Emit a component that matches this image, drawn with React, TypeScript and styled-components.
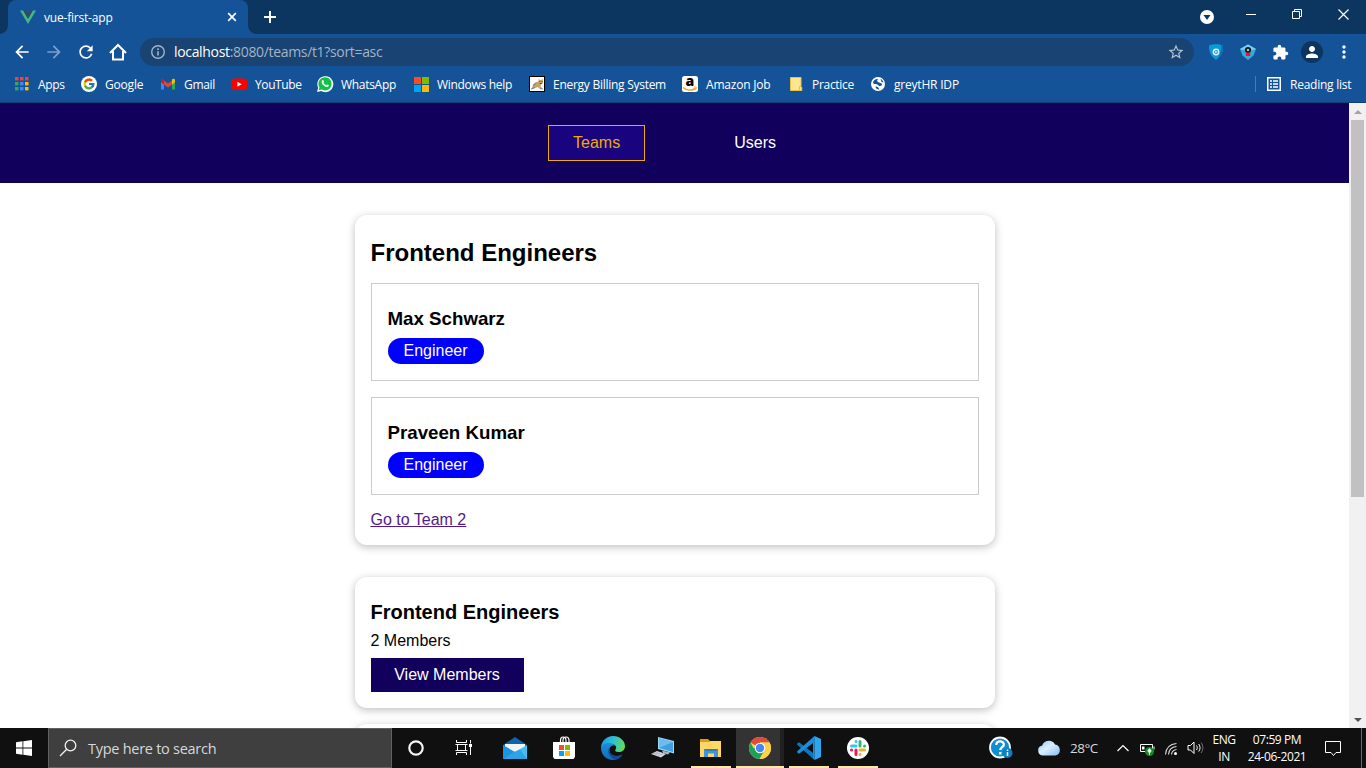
import React from "react";
import styled, { createGlobalStyle } from "styled-components";
import { MdArrowBack, MdArrowForward, MdRefresh, MdStarBorder, MdExtension, MdPerson, MdMoreVert } from "react-icons/md";
import { FcGoogle } from "react-icons/fc";

const Global = createGlobalStyle`
  * { box-sizing: border-box; }
  html, body { margin: 0; padding: 0; overflow: hidden; }
  svg { display: block; flex: none; overflow: visible; }
`;

const ui = `"Open Sans", "Noto Sans", sans-serif`;

const Screen = styled.div`
  width: 1366px;
  height: 768px;
  display: flex;
  flex-direction: column;
  overflow: hidden;
  font-family: ${ui};
  background: #fff;
`;

const Label = styled.span<{ $w: number; $size?: number; $ls?: number; $color?: string }>`
  flex: none;
  width: ${(p) => p.$w}px;
  font-size: ${(p) => p.$size ?? 12}px;
  letter-spacing: ${(p) => p.$ls ?? -0.3}px;
  color: ${(p) => p.$color ?? "#fff"};
  white-space: nowrap;
`;

/* ---------- browser chrome ---------- */

const TabStrip = styled.div`
  height: 34px;
  flex: none;
  display: flex;
  align-items: center;
  background: #0c3660;
  padding-left: 8px;
`;

const Tab = styled.div`
  position: relative;
  width: 240px;
  height: 34px;
  display: flex;
  align-items: center;
  padding: 0 10px 0 12px;
  border-radius: 8px 8px 0 0;
  background: #155399;
  &::before,
  &::after {
    content: "";
    position: absolute;
    bottom: 0;
    width: 8px;
    height: 8px;
  }
  &::before {
    left: -8px;
    background: radial-gradient(circle at 0 0, transparent 7.5px, #155399 8px);
  }
  &::after {
    right: -8px;
    background: radial-gradient(circle at 100% 0, transparent 7.5px, #155399 8px);
  }
`;

const TabTitle = styled(Label)`
  margin-left: 8px;
  margin-right: auto;
`;

const NewTab = styled.div`
  margin-left: 16px;
`;

const WindowControls = styled.div`
  margin-left: auto;
  display: flex;
  align-items: center;
  height: 34px;
  padding-right: 17px;
`;

const ControlSlot = styled.div<{ $gap: number; $up?: number }>`
  margin-left: ${(p) => p.$gap}px;
  margin-bottom: ${(p) => p.$up ?? 0}px;
`;

const Toolbar = styled.div`
  height: 36px;
  flex: none;
  display: flex;
  align-items: center;
  background: #155399;
  padding: 0 8px 0 12px;
  color: #fff;
`;

const NavButtons = styled.div`
  display: flex;
  flex: none;
  gap: 12px;
  width: 128px;
`;

const AddressBar = styled.div`
  width: 1054px;
  flex: none;
  height: 28px;
  display: flex;
  align-items: center;
  border-radius: 14px;
  background: #194372;
  padding: 0 9px 0 10px;
`;

const Url = styled.div`
  flex: 1;
  margin-left: 8px;
  font-size: 14px;
  letter-spacing: -0.33px;
  color: #a3b4c7;
  line-height: 20px;
  b {
    font-weight: 400;
    color: #fff;
  }
`;

const Extensions = styled.div`
  display: flex;
  align-items: center;
  margin-left: 12px;
  gap: 10px;
`;

const Avatar = styled.div`
  width: 22px;
  height: 22px;
  border-radius: 50%;
  background: #0c3660;
  display: grid;
  place-items: center;
  margin-left: 1px;
`;

const Bookmarks = styled.div`
  height: 33px;
  flex: none;
  display: flex;
  align-items: center;
  gap: 16px;
  padding: 0 14px 4px 14px;
  background: #155399;
  border-bottom: 1px solid #113f73;
`;

const Bookmark = styled.div`
  display: flex;
  align-items: center;
  gap: 8px;
  flex: none;
`;

const IconBox = styled.div<{ $w?: number }>`
  width: ${(p) => p.$w ?? 16}px;
  height: 20px;
  display: grid;
  place-items: center;
`;

const ReadingList = styled(Bookmark)`
  margin-left: auto;
  height: 16px;
  border-left: 1px solid #4a7ab1;
  padding-left: 10px;
`;

/* ---------- page ---------- */

const Viewport = styled.div`
  height: 625px;
  flex: none;
  display: flex;
  overflow: hidden;
  font-family: "Liberation Sans", Arial, sans-serif;
  font-size: 16px;
  color: #000;
`;

const Page = styled.div`
  width: 1349px;
  height: 625px;
  overflow: hidden;
`;

const Header = styled.header`
  height: 80px;
  display: flex;
  justify-content: center;
  align-items: center;
  gap: 64px;
  background: #11005c;
`;

const NavLink = styled.a<{ $active?: boolean }>`
  height: 36px;
  line-height: 34px;
  padding: 0 24px;
  border: 1px solid ${(p) => (p.$active ? "#f1a80a" : "transparent")};
  background: ${(p) => (p.$active ? "#1a037e" : "transparent")};
  color: ${(p) => (p.$active ? "#f1a80a" : "#fff")};
`;

const Card = styled.section<{ $top: number; $height: number }>`
  width: 640px;
  height: ${(p) => p.$height}px;
  margin: ${(p) => p.$top}px auto 0;
  padding: 16px;
  border-radius: 12px;
  background: #fff;
  box-shadow: 0 2px 8px rgba(0, 0, 0, 0.26);
`;

const TeamTitle = styled.h2`
  margin: 8px 0 16px;
  font-size: 24px;
  line-height: 28px;
`;

const Member = styled.div`
  height: 98px;
  border: 1px solid #ccc;
  padding: 24px 16px 16px;
  margin-bottom: 16px;
`;

const MemberName = styled.h3`
  margin: 0 0 9px;
  font-size: 18.72px;
  line-height: 21px;
`;

const Role = styled.span`
  display: inline-block;
  height: 26px;
  line-height: 25px;
  padding: 0 16px;
  border-radius: 13px;
  background: #00f;
  color: #fff;
`;

const TeamLink = styled.a`
  display: block;
  line-height: 18px;
  color: #551a8b;
  text-decoration: underline;
`;

const SmallTitle = styled.h3`
  margin: 8px 0;
  font-size: 20px;
  line-height: 23px;
`;

const Count = styled.div`
  line-height: 18px;
  margin: 0 0 8px;
`;

const ViewButton = styled.a`
  display: inline-block;
  height: 34px;
  line-height: 33px;
  width: 153px;
  text-align: center;
  background: #11005c;
  color: #fff;
`;

const Scrollbar = styled.div`
  width: 17px;
  height: 625px;
  display: flex;
  flex-direction: column;
  align-items: center;
  background: #f1f1f1;
`;

const ScrollArrow = styled.div`
  height: 17px;
  width: 17px;
  display: grid;
  place-items: center;
`;

const Thumb = styled.div`
  width: 13px;
  height: 377px;
  background: #c1c1c1;
  margin-bottom: auto;
`;

/* ---------- taskbar ---------- */

const Taskbar = styled.div`
  height: 40px;
  flex: none;
  display: flex;
  background: #101010;
`;

const Start = styled.div`
  width: 48px;
  display: grid;
  place-items: center;
`;

const Search = styled.div`
  width: 344px;
  height: 40px;
  border: 1px solid #616161;
  background: #3f3f3f;
  display: flex;
  align-items: center;
  padding-left: 10px;
  gap: 11px;
`;

const Apps = styled.div`
  width: 491px;
  display: grid;
  grid-template-columns: 48px 48px 54px 44px 54px 45px 51px 48px 50px 48px;
`;

const AppSlot = styled.div<{ $open?: boolean; $active?: boolean }>`
  display: grid;
  place-items: center;
  position: relative;
  background: ${(p) => (p.$active ? "linear-gradient(90deg, #333 44px, #202020 44px)" : "none")};
  &::after {
    content: "";
    display: ${(p) => (p.$open || p.$active ? "block" : "none")};
    position: absolute;
    bottom: 0;
    left: ${(p) => (p.$active ? 0 : "calc(50% - 20px)")};
    width: ${(p) => (p.$active ? "48px" : "40px")};
    height: 2px;
    background: #ffe7a6;
  }
`;

const Tray = styled.div`
  flex: 1;
  display: flex;
  align-items: center;
  justify-content: flex-end;
`;

const TraySlot = styled.div<{ $w: number; $right?: number; $left?: number }>`
  width: ${(p) => p.$w}px;
  padding: 0 ${(p) => p.$right ?? 0}px 0 ${(p) => p.$left ?? 0}px;
  flex: none;
  display: grid;
  place-items: center;
`;

const TrayText = styled.div<{ $w: number; $ls?: number }>`
  width: ${(p) => p.$w}px;
  flex: none;
  text-align: center;
  font-size: 12px;
  line-height: 17px;
  letter-spacing: ${(p) => p.$ls ?? -0.4}px;
  color: #fff;
  white-space: nowrap;
  margin-top: -1px;
`;

const ShowDesktop = styled.div`
  width: 5px;
  height: 40px;
  border-left: 1px solid #6a6a6a;
`;

/* ---------- drawings ---------- */

const VueLogo = () => (
  <svg width="16" height="16" viewBox="0 0 16 16">
    <path d="M0 1.500h3.200L8 9.800l4.800-8.300H16L8 15z" fill="#41b883" />
    <path d="M3.200 1.500h2.900L8 4.800l1.900-3.300h2.900L8 9.800z" fill="#35495e" />
  </svg>
);

const HomeIcon = () => (
  <svg width="20" height="20" viewBox="0 0 20 20">
    <path d="M2 11L10 3l8 8M5 9v8.500h10V9" fill="none" stroke="#fff" strokeWidth="2" />
  </svg>
);

const AppsGrid = () => {
  const c = ["#f44336", "#f44336", "#f44336", "#34a853", "#4285f4", "#fbbc05", "#34a853", "#4285f4", "#fbbc05"];
  return (
    <svg width="16" height="16">
      {c.map((f, i) => (
        <g key={i}>
          <rect x={1 + (i % 3) * 5} y={1 + Math.floor(i / 3) * 5} width="3.500" height="3" fill={f} />
          <rect x={1 + (i % 3) * 5} y={4 + Math.floor(i / 3) * 5} width="3.500" height="1" fill={f} opacity=".4" />
        </g>
      ))}
    </svg>
  );
};

const GoogleIcon = () => (
  <svg width="16" height="16" viewBox="0 0 16 16">
    <circle cx="8" cy="8" r="8" fill="#fff" />
    <FcGoogle x="1.500" y="1.500" width="13" height="13" size={13} />
  </svg>
);

const GmailIcon = () => (
  <svg width="16" height="16" viewBox="0 0 16 16">
    <path d="M1 4v9.500h3V6z" fill="#4285f4" />
    <path d="M15 4v9.500h-3V6z" fill="#34a853" />
    <path d="M4 4.500v4L8 11.500l4-3v-4L8 7.500z" fill="#ea4335" />
    <path d="M1 4.200C1 2.600 2.700 2.200 4 3.300v5.200L1 6.300z" fill="#c5221f" />
    <path d="M15 4.200c0-1.600-1.700-2-3-.9v5.200l3-2.200z" fill="#fbbc04" />
  </svg>
);

const YouTubeIcon = () => (
  <svg width="16" height="16" viewBox="0 0 16 16">
    <rect x="0" y="2.500" width="16" height="11.500" rx="3" fill="#f00" />
    <path d="M6.400 5.800v4.900l4.200-2.450z" fill="#fff" />
  </svg>
);

const WhatsAppIcon = () => (
  <svg width="16" height="16" viewBox="0 0 16 16">
    <path d="M0 16l1.200-4.200A8 8 0 1 1 4.200 15z" fill="#fff" />
    <path d="M1.700 14.300l.7-2.900A6.600 6.600 0 1 1 4.700 13.600z" fill="#12c143" />
    <path d="M5.500 4.200c.5-.2.800-.1 1 .4l.5 1.200c.1.300-.5.800-.5 1 .6 1.200 1.500 1.900 2.700 2.400.4-.1.700-.9 1-.8l1.500.7c.4.300 0 1.400-.6 1.700-2.700 1.100-7-3-6.400-5.300.1-.5.400-1 .8-1.300z" fill="#fff" />
  </svg>
);

const MsSquares = ({ s = 16, g = 1 }: { s?: number; g?: number }) => {
  const q = (s - g) / 2;
  return (
    <svg width={s} height={s}>
      <rect width={q} height={q} fill="#f25022" />
      <rect x={q + g} width={q} height={q} fill="#7fba00" />
      <rect y={q + g} width={q} height={q} fill="#00a4ef" />
      <rect x={q + g} y={q + g} width={q} height={q} fill="#ffb900" />
    </svg>
  );
};

const TomcatIcon = () => (
  <svg width="16" height="16">
    <rect x=".5" y=".5" width="15" height="15" fill="#fff" stroke="#000" />
    <path d="M3 12l1-3.500 3-2.500 2.500-.5V3l1.500 1h1.500L14 3v4l-2 1.500-.5 2 2 2H10l-1-1.500-3 1L4.500 13z" fill="#c3a368" />
    <path d="M2 13l4-1.500M11 12.500l3 .5M4 9.500l3-2" stroke="#777" strokeWidth=".9" />
    <path d="M10.500 5.500h.8M12.500 5.500h.8M10.800 7.500h2" stroke="#4c3a1a" strokeWidth="1" />
  </svg>
);

const AmazonIcon = () => (
  <svg width="16" height="16">
    <rect width="16" height="16" rx="2.500" fill="#fff" />
    <text x="3.400" y="10.300" fontFamily="Open Sans" fontWeight="800" fontSize="14" fill="#000">a</text>
    <path d="M1 11.500c4 3.300 9 3.200 12.500.8" fill="none" stroke="#f90" strokeWidth="1.500" />
    <path d="M11.800 11.200c1.500-.5 2.600-.2 2.500.1.200.6-.1 1.500-.9 2.400" fill="none" stroke="#f90" strokeWidth="1" />
  </svg>
);

const FolderMark = () => (
  <svg width="16" height="16">
    <path d="M2.500 1.500h10.500v9l.8 1v3H2.500z" fill="#ffe58f" stroke="#e6c34f" />
    <path d="M11.500 14v-3.500h1.500" fill="none" stroke="#e6c34f" />
  </svg>
);

const GlobeIcon = () => (
  <svg width="16" height="16">
    <circle cx="8" cy="8" r="7" fill="#fff" />
    <path d="M3 6.500C3.300 5 4.500 3.700 5.800 3.200L8.500 3c-1.500 1-1.800 2-.5 3s3 .6 3.800 1.800S11 10.500 9.500 10 7.500 8 5.500 8 3.500 7.500 3 6.500z" fill="#155399" />
    <path d="M5.500 10.500c1.500 0 2.500.5 3 1.500l1 1.500c-2 .3-3.800-.8-4-3zM10.500 3c1.500.5 2.700 2 3 3.500l-2-.5z" fill="#155399" />
  </svg>
);

const ShieldIcon = () => (
  <svg width="16" height="16" viewBox="0 0 16 16">
    <path d="M1 1.500C5-.3 11-.3 15 1.500c.3 6-2 11-7 14.500C3 12.500.7 7.500 1 1.500z" fill="#0a9ad9" />
    <path d="M13 1l2 .5c.3 6-2 11-7 14.500 4-4 5.500-9.500 5-15z" fill="#0a75b0" />
    <circle cx="8" cy="8" r="3.400" fill="#e8f6fc" />
    <path d="M9.800 7C8.600 6 6.500 6.500 6.500 8.100c0 1.800 2.500 1.900 3.200.7V8H8.300" fill="none" stroke="#0593d3" />
  </svg>
);

const KeeperIcon = () => (
  <svg width="16" height="16" viewBox="0 0 16 16">
    <path d="M8 .5L16 5l-2.500 6.500L8 16l-5.500-4.500L0 5z" fill="#3ba7dc" />
    <path d="M8 .5L16 5l-3 1-5-2-5 2-3-1z" fill="#7bd0f2" />
    <circle cx="8" cy="6" r="2.200" fill="#7bd0f2" stroke="#111" strokeWidth="1.700" />
    <rect x="6" y="8.600" width="4.200" height="3.400" fill="#f21818" />
  </svg>
);

const ReadingIcon = () => (
  <svg width="16" height="16" fill="none" stroke="#fff">
    <rect x="1.750" y="1.750" width="12.500" height="12.500" strokeWidth="1.500" />
    <path d="M4 5h2M4 8h2M4 11h2M7 5h5M7 8h5M7 11h5" strokeWidth="1.600" />
  </svg>
);

const InfoIcon = () => (
  <svg width="16" height="16" fill="none" stroke="#a3b4c7">
    <circle cx="8" cy="8" r="6.300" strokeWidth="1.400" />
    <path d="M8 7.200v4.300M8 4.300v1.600" strokeWidth="1.600" />
  </svg>
);

const CortanaIcon = () => (
  <svg width="18" height="18"><circle cx="9" cy="9" r="6.700" fill="none" stroke="#f4f4f4" strokeWidth="2.200" /></svg>
);

const TaskViewIcon = () => (
  <svg width="18" height="18" fill="none" stroke="#fff">
    <path d="M1.500 1v2.500h10V1M1.500 16v-2.500h10V16M2.500 5.500h8v6h-8zM15.500 1v3.500M15.500 8v8M0.500 5.500h12M0.500 11.500h12" />
    <rect x="14" y="5" width="3" height="3" fill="#fff" stroke="none" />
  </svg>
);

const MailIcon = () => (
  <svg width="24" height="24" viewBox="0 0 24 24">
    <path d="M0 9L12 1l12 8v5H0z" fill="#0b64ad" />
    <path d="M2 8h20v5l-10 6L2 13z" fill="#f3f3f3" />
    <path d="M0 9l12 7-12 7z" fill="#1a94e0" />
    <path d="M24 9v14H0z" fill="#40c0f2" />
    <path d="M0 23l11-7 6-2.500L24 23z" fill="#2ba5e8" />
  </svg>
);

const StoreIcon = () => (
  <svg width="24" height="24" viewBox="0 0 24 24">
    <path d="M1 6h22v15l-1.500 2h-19L1 21z" fill="#fff" />
    <path d="M8.500 6V4.500c0-2 1-3.500 2.500-3.500 2 0 3 1.500 3 3.500V6M11 6V4.500c0-2 1-3.500 3-3.500s3 1.500 3 3.500V6" fill="none" stroke="#fff" strokeWidth="1.200" />
    <rect x="7" y="9" width="5" height="5" fill="#f25022" />
    <rect x="13" y="9" width="5" height="5" fill="#7fba00" />
    <rect x="7" y="15" width="5" height="5" fill="#00a4ef" />
    <rect x="13" y="15" width="5" height="5" fill="#ffb900" />
  </svg>
);

const EdgeIcon = () => (
  <svg width="24" height="24" viewBox="0 0 24 24">
    <defs>
      <linearGradient id="eg" x1="0" y1="0.300" x2="1" y2="0.500">
        <stop offset="0" stopColor="#1f9be0" />
        <stop offset=".5" stopColor="#2fc0d5" />
        <stop offset="1" stopColor="#64dc53" />
      </linearGradient>
      <linearGradient id="eb" x1="0" y1="0" x2="0" y2="1">
        <stop offset="0" stopColor="#1b8fd8" />
        <stop offset="1" stopColor="#1569bd" />
      </linearGradient>
    </defs>
    <path d="M0 12C0 5 5.500 0 12 0c7 0 12 5 12 10 0 4-3 6-6.500 6-3 0-4-1.200-3-2.500 2-2.500-.5-5.500-4-5.500C5 8 1 10 0 12z" fill="url(#eg)" />
    <path d="M0 12c.5-3.500 4.500-5 8-5 3.500 0 5.500 1.500 6 3-2.500-1.500-5.500.5-5.500 4 0 5 6 8 13 4.500C19.500 22 16 24 12 24 5 24 0 18.500 0 12z" fill="url(#eb)" />
    <path d="M8.600 11c-2.500 3-1.600 9.500 5.400 12.700 3.500-.5 6-2.500 7.700-5.200-7 3-13.200.5-13.200-4.500z" fill="#12488f" />
  </svg>
);

const PcIcon = () => (
  <svg width="24" height="24" viewBox="0 0 24 24">
    <path d="M7 1l16 4v12.500L7 13z" fill="#9edcf8" />
    <path d="M8 2.300l14 3.700V16L8 12z" fill="#3f9fe0" />
    <path d="M8 2.300l14 3.700L8 12z" fill="#6cbcf0" />
    <path d="M0 18l6-3 9 3-5 3.500z" fill="#d3dbe0" />
    <path d="M2 18l5-1.500M4 19l5-2M7 20l5-2.200" stroke="#97a3aa" strokeWidth=".7" />
    <path d="M11 14.500l8 2-2 2-5-1.500z" fill="#aab8bf" />
  </svg>
);

const ExplorerIcon = () => (
  <svg width="24" height="24" viewBox="0 0 24 24">
    <path d="M1 3h8l2 2h11v3H1z" fill="#e09c0c" />
    <path d="M1 6h9l2-1h10v16H1z" fill="#ffd766" />
    <path d="M5 21v-8h14v8h-4v-3.500H9V21z" fill="#3f97d9" />
    <path d="M5 13h14l-2 2H7z" fill="#2c7fc0" />
  </svg>
);

const ChromeIcon = () => (
  <svg width="24" height="24" viewBox="0 0 24 24">
    <circle cx="12" cy="12" r="11" fill="#fdd04b" />
    <path d="M12 12L2.470 6.500A11 11 0 0 1 21.530 6.500H12z" fill="#e04a3f" />
    <path d="M2.470 6.500A11 11 0 0 0 11.500 23l5-8.500L12 12H5.500z" fill="#1fa05a" />
    <path d="M12 6.500h9.530A11 11 0 0 1 11.500 23l5.200-8.500z" fill="#fdd04b" />
    <circle cx="12" cy="12" r="5.300" fill="#fff" />
    <circle cx="12" cy="12" r="4.200" fill="#4587f3" />
  </svg>
);

const CodeIcon = () => (
  <svg width="24" height="24" viewBox="0 0 24 24">
    <path d="M17.500 0L24 3v18l-6.500 3z" fill="#30a6ee" />
    <path d="M0 7.800l2-1.600L17.500 18v6L.2 8.800z" fill="#0a77c2" />
    <path d="M0 16.200l2 1.600L17.500 6V0L.2 15.200z" fill="#1c8fdc" />
    <path d="M17.500 0v24l-1.500-1.500V1.500z" fill="#1c8fdc" />
  </svg>
);

const SlackIcon = () => (
  <svg width="24" height="24" viewBox="0 0 24 24" fill="none" strokeLinecap="round" strokeWidth="3">
    <circle cx="12" cy="12" r="11" fill="#fff" />
    <path d="M5.500 10h4.500M10 5.500h.1" stroke="#36c5f0" />
    <path d="M14 5.500V10M18.500 10h.1" stroke="#2eb67d" />
    <path d="M18.500 14H14M14 18.500h.1" stroke="#ecb22e" />
    <path d="M10 18.500V14M5.500 14h.1" stroke="#e01e5a" />
  </svg>
);

const HelpIcon = () => (
  <svg width="24" height="24" viewBox="0 0 24 24">
    <circle cx="11" cy="11.500" r="10" fill="#0e8fd0" stroke="#fff" strokeWidth="1.800" />
    <path d="M7.300 9c0-4.800 7.700-4.600 7.500-.4-.1 2.600-3.500 2.500-3.500 5.400M11.300 16v2.400" fill="none" stroke="#fff" strokeWidth="2.300" />
    <circle cx="18.500" cy="17" r="5" fill="#0e7ec0" />
    <path d="M18.500 16v4M18.500 13.500v1.500" stroke="#fff" strokeWidth="1.500" />
  </svg>
);

const CloudIcon = () => (
  <svg width="24" height="18" viewBox="0 0 24 18">
    <defs>
      <linearGradient id="cl" x1="0" y1="0" x2="1" y2="1">
        <stop offset="0" stopColor="#8bc4f4" />
        <stop offset=".45" stopColor="#dceefd" />
        <stop offset="1" stopColor="#86bdf0" />
      </linearGradient>
    </defs>
    <path d="M6 16.500a5 5 0 0 1-.8-9.900A7 7 0 0 1 18 5.500a5.600 5.600 0 0 1 .5 11z" fill="url(#cl)" />
  </svg>
);

const BatteryIcon = () => (
  <svg width="16" height="16" fill="none" stroke="#fff">
    <path d="M1.500 4.500h12v7h-12zM15 6.500v3" />
    <path d="M3 6.500h2.500v3H3z" fill="#fff" stroke="none" />
    <circle cx="10.500" cy="11.500" r="4.500" fill="#178a24" stroke="none" />
    <path d="M10.500 8.700c2 1 2 3.200 0 4.200-2-1-2-3.200 0-4.200zM10.500 12.500v2.500" fill="#fff" strokeWidth=".7" />
  </svg>
);

const WifiIcon = () => (
  <svg width="14" height="14" fill="none" stroke="#ddd" strokeWidth="1.100">
    <path d="M1.500 13.500C2 7 6 3 12.500 2.500M4.500 13.500c.3-4.500 3-7.500 8-8M7.500 13.500c.2-2.500 2-4.500 5-5" />
    <circle cx="11.500" cy="12.500" r="1.500" fill="#fff" stroke="none" />
  </svg>
);

const VolumeIcon = () => (
  <svg width="17" height="16" fill="none" stroke="#fff">
    <path d="M1 5.500h2.500l3.500-3.500v11.500L3.500 10H1z" />
    <path d="M9.500 5.500c1 1.500 1 3 0 4.500M11.700 4c1.800 2.300 1.800 5.200 0 7.500" />
    <path d="M14 2.500c2.500 3.300 2.500 7.200 0 10.500" stroke="#777" />
  </svg>
);

const bookmarks: { label: string; w: number; ls?: number; icon: React.ReactNode }[] = [
  { label: "Apps", w: 27, icon: <AppsGrid /> },
  { label: "Google", w: 39, ls: -0.2, icon: <GoogleIcon /> },
  { label: "Gmail", w: 31, icon: <GmailIcon /> },
  { label: "YouTube", w: 46, ls: -0.4, icon: <YouTubeIcon /> },
  { label: "WhatsApp", w: 56, icon: <WhatsAppIcon /> },
  { label: "Windows help", w: 76, icon: <MsSquares s={15} /> },
  { label: "Energy Billing System", w: 113, ls: -0.27, icon: <TomcatIcon /> },
  { label: "Amazon Job", w: 66, ls: -0.2, icon: <AmazonIcon /> },
  { label: "Practice", w: 42, icon: <FolderMark /> },
  { label: "greytHR IDP", w: 66, ls: -0.2, icon: <GlobeIcon /> },
];

const members = ["Max Schwarz", "Praveen Kumar"];

export default function App() {
  return (
    <Screen>
      <Global />
      <TabStrip>
        <Tab>
          <VueLogo />
          <TabTitle $w={70} $ls={-0.2}>vue-first-app</TabTitle>
          <svg width="12" height="12"><path d="M2.200 2.200l7.600 7.600M9.800 2.200L2.200 9.800" stroke="#fff" strokeWidth="1.700" /></svg>
        </Tab>
        <NewTab>
          <svg width="12" height="12"><path d="M6 0v12M0 6h12" stroke="#fff" strokeWidth="2" /></svg>
        </NewTab>
        <WindowControls>
          <ControlSlot $gap={0}>
            <svg width="14" height="14"><circle cx="7" cy="7" r="7" fill="#fff" /><path d="M3.500 5h7L7 10z" fill="#0c3660" /></svg>
          </ControlSlot>
          <ControlSlot $gap={32} $up={6}>
            <svg width="10" height="10"><path d="M0 5.500h10" stroke="#fff" /></svg>
          </ControlSlot>
          <ControlSlot $gap={36} $up={6}>
            <svg width="10" height="10" fill="none" stroke="#fff"><path d="M.5 2.500h7v7h-7zM2.500 2.500v-2h7v7h-2" /></svg>
          </ControlSlot>
          <ControlSlot $gap={36} $up={6}>
            <svg width="11" height="11"><path d="M.5.5l10 10M10.500.5l-10 10" stroke="#fff" strokeWidth="1.200" /></svg>
          </ControlSlot>
        </WindowControls>
      </TabStrip>

      <Toolbar>
        <NavButtons>
          <MdArrowBack size={20} />
          <MdArrowForward size={20} color="#7f9fc8" />
          <MdRefresh size={20} />
          <HomeIcon />
        </NavButtons>
        <AddressBar>
          <InfoIcon />
          <Url><b>localhost</b>:8080/teams/t1?sort=asc</Url>
          <MdStarBorder size={18} color="#b5c2d0" />
        </AddressBar>
        <Extensions>
          <IconBox $w={20}><ShieldIcon /></IconBox>
          <IconBox $w={24}><KeeperIcon /></IconBox>
          <IconBox $w={20}><MdExtension size={17} /></IconBox>
          <Avatar><MdPerson size={18} /></Avatar>
          <IconBox $w={22}><MdMoreVert size={20} /></IconBox>
        </Extensions>
      </Toolbar>

      <Bookmarks>
        {bookmarks.map((b) => (
          <Bookmark key={b.label}>
            <IconBox>{b.icon}</IconBox>
            <Label $w={b.w} $ls={b.ls}>{b.label}</Label>
          </Bookmark>
        ))}
        <ReadingList>
          <ReadingIcon />
          <Label $w={62} $ls={-0.25}>Reading list</Label>
        </ReadingList>
      </Bookmarks>

      <Viewport>
        <Page>
          <Header>
            <NavLink $active>Teams</NavLink>
            <NavLink>Users</NavLink>
          </Header>
          <Card $top={32} $height={330}>
            <TeamTitle>Frontend Engineers</TeamTitle>
            {members.map((m) => (
              <Member key={m}>
                <MemberName>{m}</MemberName>
                <Role>Engineer</Role>
              </Member>
            ))}
            <TeamLink>Go to Team 2</TeamLink>
          </Card>
          <Card $top={32} $height={131}>
            <SmallTitle>Frontend Engineers</SmallTitle>
            <Count>2 Members</Count>
            <ViewButton>View Members</ViewButton>
          </Card>
          <Card $top={16} $height={131} />
        </Page>
        <Scrollbar>
          <ScrollArrow><svg width="8" height="4"><path d="M0 4l4-4 4 4z" fill="#a3a3a3" /></svg></ScrollArrow>
          <Thumb />
          <ScrollArrow><svg width="8" height="4"><path d="M0 0l4 4 4-4z" fill="#505050" /></svg></ScrollArrow>
        </Scrollbar>
      </Viewport>

      <Taskbar>
        <Start>
          <svg width="16" height="16" fill="#fff">
            <path d="M0 2.200L6.500 1.300V7.500H0zM7.300 1.200L16 0v7.500H7.300zM0 8.400h6.500v6.300L0 13.800zM7.300 8.400H16V16l-8.700-1.200z" />
          </svg>
        </Start>
        <Search>
          <svg width="18" height="18" fill="none" stroke="#f0f0f0" strokeWidth="1.300">
            <circle cx="11.500" cy="6.500" r="5.300" />
            <path d="M7.700 10.300L1 17" />
          </svg>
          <Label $w={200} $size={14.500} $ls={-0.27} $color="#d8d8d8">Type here to search</Label>
        </Search>
        <Apps>
          <AppSlot><CortanaIcon /></AppSlot>
          <AppSlot><TaskViewIcon /></AppSlot>
          <AppSlot><MailIcon /></AppSlot>
          <AppSlot><StoreIcon /></AppSlot>
          <AppSlot><EdgeIcon /></AppSlot>
          <AppSlot><PcIcon /></AppSlot>
          <AppSlot $open><ExplorerIcon /></AppSlot>
          <AppSlot $active><ChromeIcon /></AppSlot>
          <AppSlot $open><CodeIcon /></AppSlot>
          <AppSlot $open><SlackIcon /></AppSlot>
        </Apps>
        <Tray>
          <TraySlot $w={50}><HelpIcon /></TraySlot>
          <TraySlot $w={44} $left={2}><CloudIcon /></TraySlot>
          <Label $w={36} $size={13.500} $ls={-0.5} $color="#d8d8d8">28°C</Label>
          <TraySlot $w={33}><svg width="12" height="8"><path d="M.5 7L6 1.500 11.500 7" fill="none" stroke="#fff" strokeWidth="1.200" /></svg></TraySlot>
          <TraySlot $w={16}><BatteryIcon /></TraySlot>
          <TraySlot $w={32}><WifiIcon /></TraySlot>
          <TraySlot $w={14}><VolumeIcon /></TraySlot>
          <TrayText $w={46}>ENG<br />IN</TrayText>
          <TrayText $w={60}>07:59 PM<br />24-06-2021</TrayText>
          <TraySlot $w={54} $right={2}>
            <svg width="16" height="16" fill="none" stroke="#fff"><path d="M.5 1.500h15v11h-4.500l-2.500 3-2.500-3H.5z" /></svg>
          </TraySlot>
          <ShowDesktop />
        </Tray>
      </Taskbar>
    </Screen>
  );
}
